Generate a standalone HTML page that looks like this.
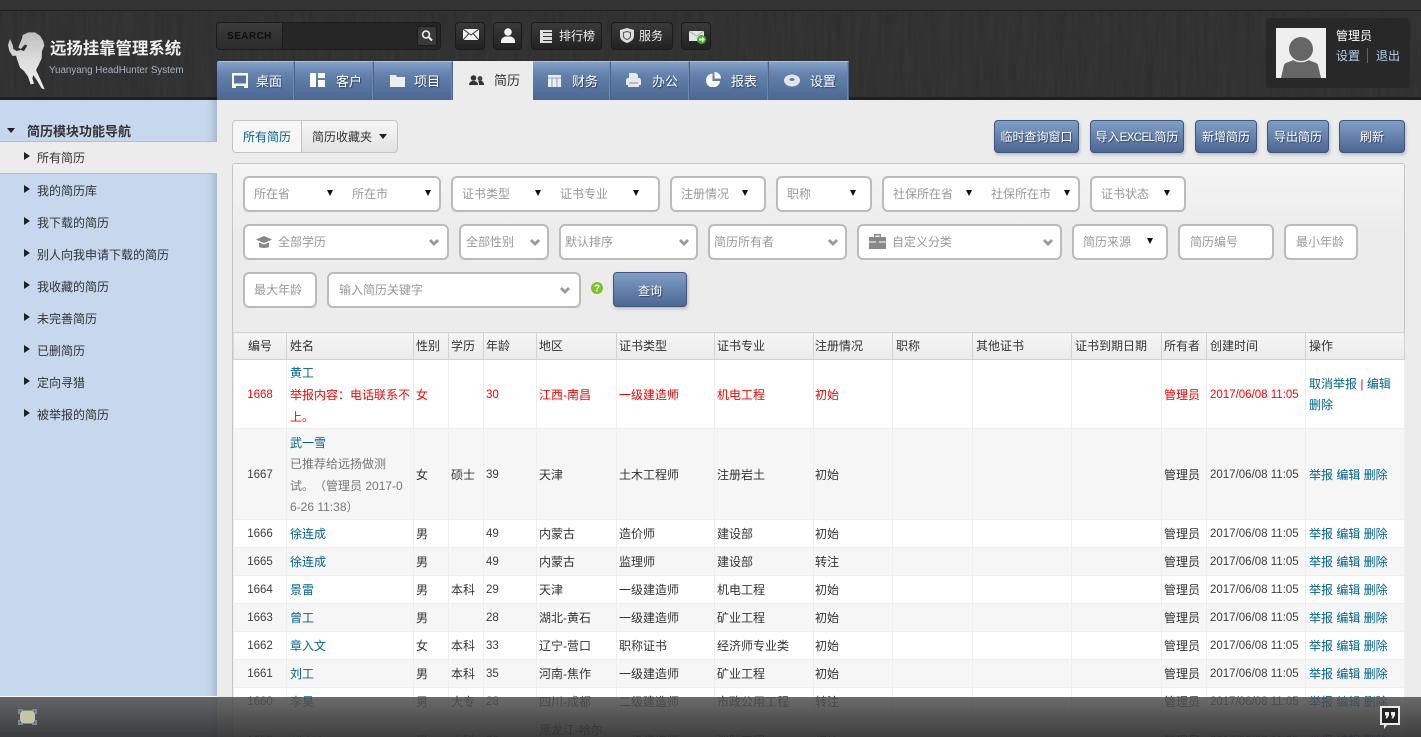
<!DOCTYPE html>
<html lang="zh"><head><meta charset="utf-8"><title>简历</title>
<style>
*{box-sizing:border-box;text-spacing-trim:space-all}
html,body{margin:0;padding:0;width:1421px;height:737px;overflow:hidden;background:#ececec}
body{position:relative;font:12px/1 "Liberation Sans","WenQuanYi Zen Hei","Noto Sans CJK SC",sans-serif;color:#333}
.a{position:absolute;white-space:nowrap}
#hd{left:0;top:0;width:1421px;height:100px;background:#343434;overflow:hidden}
#hd .top{position:absolute;left:0;top:0;width:1421px;height:11px;background:#333;border-bottom:1px solid #1e1e1e}
#hd .bot{position:absolute;left:0;top:97px;width:1421px;height:3px;background:#1f1f1f}
.tb{position:absolute;top:22px;height:28px;border:1px solid #1a1a1a;border-radius:4px;background:linear-gradient(#3a3a3a,#222);color:#eee;line-height:26px}
.tab{position:absolute;top:61px;height:39px;background:linear-gradient(#85a3c9,#6483af 30%,#4c6691);border-top:1px solid #a9c0dc;border-right:1px solid #4d658b;box-shadow:inset -1px 0 0 #6e88ad;color:#fff;font-size:13px;line-height:40px;text-shadow:1px 1px 1px #2b3f60}
.tab svg{position:absolute;top:11px}
.tab span{position:absolute;top:0}
#sb{left:0;top:100px;width:217px;height:637px;background:#c6d7ee;box-shadow:inset -9px 0 8px -6px #9fb0c8}
.si{position:absolute;left:37px;font-size:12px;line-height:16px;color:#333}
.ar{position:absolute;left:24px;width:0;height:0;border-left:6px solid #222;border-top:4.5px solid transparent;border-bottom:4.5px solid transparent}
.bt{position:absolute;top:120px;height:33px;border:1px solid #3c5680;border-radius:4px;background:linear-gradient(#809fc6,#4d6792);color:#fff;text-align:center;line-height:32px;font-size:12px;text-shadow:1px 1px 1px #2b3f60;box-shadow:1px 2px 3px #bbb}
#panel{left:232px;top:163px;width:1173px;height:600px;border:1px solid #c6c6c6;border-radius:3px;background:linear-gradient(#f4f4f4,#ececec 70px)}
.f{position:absolute;height:36px;background:#fff;border:2px solid #bbb;border-radius:6px;color:#999;line-height:33px;font-size:12px}
.f span{position:absolute;top:0}
.f i{position:absolute;top:12px;width:0;height:0;margin-left:1px;border-left:3px solid transparent;border-right:3px solid transparent;border-top:6px solid #111}
.f svg{position:absolute}
table{position:absolute;left:233px;top:332px;width:1171px;table-layout:fixed;border-collapse:collapse;font-size:12px;background:#fff}
th{height:27px;font-weight:normal;text-align:left;padding:0 3px;background:linear-gradient(#f5f5f5,#ebebeb);border:1px solid #d2d2d2;border-left-color:#dcdcdc;color:#333;font-size:12px}
td{padding:2px 3px 0;border:1px solid #eee;line-height:21px;height:28px;color:#333;white-space:nowrap;overflow:hidden}
td:nth-child(n+3):nth-child(-n+8),th:nth-child(n+3):nth-child(-n+8),td:nth-child(13),th:nth-child(13){padding-left:2px}
td:nth-child(9),th:nth-child(9){padding-left:1px}
tr.e td{background:#f6f6f6}
tr.r td,tr.r td.n{color:#f00}
.n{font-size:11.5px;color:#3c3c3c}
.c{text-align:center}
td:first-child,th:first-child{padding-left:3px}
.l{color:#00628f}
tr.r td .l{color:#00628f}
.g{color:#777}
.b{color:#e0004f}
.p{font-family:"Noto Sans CJK TC",sans-serif}
#bar{left:0;top:697px;width:1421px;height:40px;background:linear-gradient(rgba(82,82,82,.85),rgba(48,48,48,.93))}
</style></head><body>

<div class="a" id="hd">
<svg width="1421" height="100" style="position:absolute;left:0;top:0"><filter id="t" x="0" y="0" width="100%" height="100%"><feTurbulence type="fractalNoise" baseFrequency="0.22 0.02" numOctaves="2" seed="4"/><feColorMatrix values="0 0 0 0 0 0 0 0 0 0 0 0 0 0 0 1.2 0 0 0 -0.4"/></filter><rect y="12" width="1421" height="85" filter="url(#t)" opacity=".16"/></svg>
<div class="top"></div><div class="bot"></div>

<svg class="a" style="left:0;top:25px" width="60" height="65" viewBox="0 0 180 195"><defs><linearGradient id="h" x1="0" y1="0" x2="0" y2="1"><stop offset="0" stop-color="#bdbdbd"/><stop offset=".5" stop-color="#dedede"/><stop offset="1" stop-color="#f2f2f2"/></linearGradient></defs><path d="M68 30L85 22 105 22 120 32 130 48 133 62 126 78 125 100 115 122 108 135 115 150 125 172 134 193 125 190 112 168 100 150 97 160 102 176 92 178 84 155 72 138 60 128 52 105 48 92 38 93 28 78 24 60 30 42 38 60 40 72 50 78 62 75 72 78 82 62 75 58 62 72 55 68 62 50 66 40z" fill="url(#h)"/></svg>
<div class="a" style="left:50px;top:41px;font-weight:bold;color:#eee;line-height:17px;font-size:16.4px">远扬挂靠管理系统</div>
<div class="a" style="left:49px;top:65px;font-size:9.8px;color:#a7b4c6;line-height:12px">Yuanyang HeadHunter System</div>

<div class="tb" style="left:216px;width:225px;background:#262626"><div style="position:absolute;left:0;top:0;width:66px;height:26px;background:linear-gradient(#3c3c3c,#2b2b2b);border-radius:3px 0 0 3px;border-right:1px solid #1a1a1a;color:#0e0e0e;font-size:10px;font-weight:bold;text-align:center;line-height:27px;letter-spacing:.4px">SEARCH</div>
<div style="position:absolute;left:200px;top:3px;width:20px;height:20px;background:#3a3a3a;border:1px solid #1c1c1c;border-radius:3px"><svg width="18" height="18" viewBox="0 0 18 18" style="position:absolute;left:0;top:0"><circle cx="8" cy="7.5" r="3.4" fill="none" stroke="#eee" stroke-width="1.6"/><path d="M10.5 10l3.5 3.5" stroke="#eee" stroke-width="2"/></svg></div></div>
<div class="tb" style="left:455px;width:30px"><svg width="16" height="11" viewBox="0 0 16 11" style="position:absolute;left:7px;top:6px"><rect width="16" height="11" fill="#f2f2f2"/><path d="M0 0l8 6 8-6M0 11l5.500-6M16 11l-5.500-6" fill="none" stroke="#333" stroke-width="1"/></svg></div>
<div class="tb" style="left:493px;width:29px"><svg width="14" height="15" viewBox="0 0 14 15" style="position:absolute;left:7px;top:5px"><circle cx="7" cy="4" r="3.800" fill="#f2f2f2"/><path d="M0 15v-2c0-3 3-4 4-4.500h6c1 .5 4 1.500 4 4.500v2z" fill="#f2f2f2"/></svg></div>
<div class="tb" style="left:531px;width:71px"><svg width="12" height="13" viewBox="0 0 12 13" style="position:absolute;left:8px;top:7px"><rect width="12" height="13" fill="#ddd"/><path d="M3 2.500h9M3 6.500h9M3 10.500h9" stroke="#333"/></svg><span style="position:absolute;left:27px;top:0">排行榜</span></div>
<div class="tb" style="left:611px;width:62px"><svg width="14" height="15" viewBox="0 0 14 15" style="position:absolute;left:8px;top:5px"><path d="M7 0l7 2v6c0 4-4 6-7 7-3-1-7-3-7-7V2z" fill="#ddd"/><path d="M7 3.500l3.500 1v3.500c0 2-2 3-3.500 3.500-1.500-.5-3.500-1.500-3.500-3.500V4.500z" fill="none" stroke="#555"/></svg><span style="position:absolute;left:27px;top:0">服务</span></div>
<div class="tb" style="left:681px;width:30px"><svg width="17" height="14" viewBox="0 0 17 14" style="position:absolute;left:7px;top:8px"><rect width="15" height="10" y="0" fill="#e6e6e6"/><path d="M0 0l7.500 5 7.500-5" fill="none" stroke="#aaa"/><circle cx="12.500" cy="8.500" r="4.500" fill="#43b02a"/><path d="M10 7.500h3v-2l3 3-3 3v-2h-3z" fill="#d8ffc0"/></svg></div>

<div class="tab" style="left:217px;width:78px;border-radius:2px 0 0 0"><svg width="16" height="15" viewBox="0 0 16 15" style="left:15px"><path d="M0 0h16v15h-4v-2H4v2H0z" fill="#fff"/><rect x="2" y="2.500" width="12" height="8" fill="#58749e"/></svg><span style="left:39px">桌面</span></div>
<div class="tab" style="left:295px;width:79px"><svg width="15" height="14" viewBox="0 0 15 14" style="left:15px"><path d="M0 0h6v14H0zM8 0h7v5H8zM8 7h7v7H8z" fill="#fff"/></svg><span style="left:41px">客户</span></div>
<div class="tab" style="left:374px;width:79px"><svg width="15" height="12" viewBox="0 0 15 12" style="left:16px;top:13px"><path d="M0 0h6l1 2h8v10H0z" fill="#eee"/></svg><span style="left:40px">项目</span></div>
<div class="a" style="left:453px;top:61px;width:80px;height:39px;background:#ececec;font-size:13px;line-height:40px;color:#333"><svg width="15" height="11" viewBox="0 0 15 11" style="position:absolute;left:16px;top:14px"><circle cx="4.500" cy="3" r="2.800" fill="#333"/><circle cx="11" cy="3.500" r="2.400" fill="#444"/><path d="M0 10c0-3 2-4 4.500-4s4.500 1 4.500 4zM10 10c0-2 0-3-1-4 3-1 6 0 6 4z" fill="#333"/></svg><span style="position:absolute;left:41px;top:0">简历</span></div>
<div class="tab" style="left:533px;width:78px"><svg width="13" height="12" viewBox="0 0 13 12" style="left:15px;top:13px"><rect width="13" height="12" fill="#eee"/><path d="M0 3h13M4 3v9M9 3v9" stroke="#8fa5c4"/></svg><span style="left:39px">财务</span></div>
<div class="tab" style="left:611px;width:79px"><svg width="15" height="14" viewBox="0 0 15 14" style="left:15px"><path d="M3 0h7l2 2v3H3zM1 5h13l1 2v5h-2v2H2v-2H0V7z" fill="#e8e8e8"/><path d="M3 10h9" stroke="#7c92b4"/></svg><span style="left:41px">办公</span></div>
<div class="tab" style="left:690px;width:79px"><svg width="15" height="15" viewBox="0 0 15 15" style="left:16px;top:10px"><path d="M6.500 1.500v7.500h7.500A7 7 0 1 1 6.500 1.500z" fill="#fff"/><path d="M8.500 0a6.500 6.500 0 0 1 6.500 6.500H8.500z" fill="#fff"/></svg><span style="left:41px">报表</span></div>
<div class="tab" style="left:769px;width:80px"><svg width="16" height="13" viewBox="0 0 16 13" style="left:15px;top:12px"><ellipse cx="8" cy="6.500" rx="8" ry="6" fill="#e4e4e4"/><ellipse cx="8" cy="5.500" rx="2.500" ry="1.500" fill="#5d7aa3"/></svg><span style="left:41px">设置</span></div>

<div class="a" style="left:1266px;top:18px;width:144px;height:70px;background:#282828;border-radius:3px"></div>
<svg class="a" style="left:1276px;top:28px" width="50" height="50" viewBox="0 0 50 50"><rect width="50" height="50" fill="#efefef"/><circle cx="25" cy="21" r="12" fill="#666"/><path d="M5 50l3-13c1-3 7-3 9-5 5 3 11 3 16 0 2 2 8 2 9 5l3 13z" fill="#666"/></svg>
<div class="a" style="left:1336px;top:29px;color:#fff;font-size:12px;line-height:14px">管理员</div>
<div class="a" style="left:1336px;top:49px;color:#b5d0ee;font-size:12px;line-height:14px">设置</div>
<div class="a" style="left:1367px;top:48px;width:1px;height:15px;background:#666"></div>
<div class="a" style="left:1376px;top:49px;color:#b5d0ee;font-size:12px;line-height:14px">退出</div>
</div>

<div class="a" id="sb">
<div style="position:absolute;left:7px;top:28px;width:0;height:0;border-left:4px solid transparent;border-right:4px solid transparent;border-top:5px solid #222"></div>
<div class="si" style="left:27px;top:24px;font-weight:bold;font-size:13px">简历模块功能导航</div>
<div style="position:absolute;left:0;top:41px;width:217px;height:33px;background:#ececec;border-top:1px solid #a9c0de;border-bottom:1px solid #a9c0de"></div>
<i class="ar" style="top:52px"></i><div class="si" style="top:50px">所有简历</div>
<i class="ar" style="top:85px"></i><div class="si" style="top:83px">我的简历库</div>
<i class="ar" style="top:117px"></i><div class="si" style="top:115px">我下载的简历</div>
<i class="ar" style="top:149px"></i><div class="si" style="top:147px">别人向我申请下载的简历</div>
<i class="ar" style="top:181px"></i><div class="si" style="top:179px">我收藏的简历</div>
<i class="ar" style="top:213px"></i><div class="si" style="top:211px">未完善简历</div>
<i class="ar" style="top:245px"></i><div class="si" style="top:243px">已删简历</div>
<i class="ar" style="top:277px"></i><div class="si" style="top:275px">定向寻猎</div>
<i class="ar" style="top:309px"></i><div class="si" style="top:307px">被举报的简历</div>
</div>

<div class="a" style="left:232px;top:120px;width:70px;height:33px;border:1px solid #c4c4c4;border-radius:4px 0 0 4px;background:#f6f6f6;color:#00628f;line-height:32px;text-align:center;font-size:12px">所有简历</div>
<div class="a" style="left:301px;top:120px;width:97px;height:33px;border:1px solid #c4c4c4;border-radius:0 4px 4px 0;background:linear-gradient(#f6f6f6,#e2e2e2);line-height:32px;padding-left:10px;font-size:12px">简历收藏夹<i style="position:absolute;left:77px;top:13px;width:0;height:0;border-left:4px solid transparent;border-right:4px solid transparent;border-top:5px solid #222"></i></div>
<div class="bt" style="left:994px;width:85px">临时查询窗口</div>
<div class="bt" style="left:1090px;width:94px">导入<span style="font-size:11.5px;letter-spacing:-.6px">EXCEL</span>简历</div>
<div class="bt" style="left:1195px;width:62px">新增简历</div>
<div class="bt" style="left:1267px;width:62px">导出简历</div>
<div class="bt" style="left:1339px;width:66px">刷新</div>

<div class="a" id="panel"></div>

<div class="f" style="left:243px;top:176px;width:198px"><span style="left:9px">所在省</span><i style="left:81px"></i><span style="left:107px">所在市</span><i style="left:179px"></i></div>
<div class="f" style="left:451px;top:176px;width:209px"><span style="left:9px">证书类型</span><i style="left:81px"></i><span style="left:107px">证书专业</span><i style="left:179px"></i></div>
<div class="f" style="left:670px;top:176px;width:96px"><span style="left:9px">注册情况</span><i style="left:69px"></i></div>
<div class="f" style="left:776px;top:176px;width:96px"><span style="left:9px">职称</span><i style="left:71px"></i></div>
<div class="f" style="left:882px;top:176px;width:198px"><span style="left:9px">社保所在省</span><i style="left:81px"></i><span style="left:107px">社保所在市</span><i style="left:179px"></i></div>
<div class="f" style="left:1090px;top:176px;width:96px"><span style="left:9px">证书状态</span><i style="left:71px"></i></div>

<svg width="0" height="0" style="position:absolute"><defs><path id="ch" d="M0 2l2-2 3 3 3-3 2 2-5 5z" fill="#999"/></defs></svg>
<div class="f" style="left:243px;top:224px;width:206px"><svg width="16" height="12" viewBox="0 0 16 12" style="left:11px;top:10px"><path d="M8 0l8 3.500-8 3.500L0 3.500z" fill="#888"/><path d="M3 6.500l5 2 5-2V11c-3 1.300-7 1.300-10 0z" fill="#888"/></svg><span style="left:33px">全部学历</span><svg width="10" height="7" style="left:184px;top:13px"><use href="#ch"/></svg></div>
<div class="f" style="left:459px;top:224px;width:90px"><span style="left:5px">全部性别</span><svg width="10" height="7" style="left:69px;top:13px"><use href="#ch"/></svg></div>
<div class="f" style="left:559px;top:224px;width:139px"><span style="left:4px">默认排序</span><svg width="10" height="7" style="left:118px;top:13px"><use href="#ch"/></svg></div>
<div class="f" style="left:708px;top:224px;width:139px"><span style="left:4px">简历所有者</span><svg width="10" height="7" style="left:118px;top:13px"><use href="#ch"/></svg></div>
<div class="f" style="left:857px;top:224px;width:205px"><svg width="17" height="15" viewBox="0 0 17 15" style="left:10px;top:8px"><path d="M5 0h7v3h5v12H0V3h5zM6.500 1.500V3h4V1.500z" fill="#888" fill-rule="evenodd"/><path d="M0 8h7M10 8h7" stroke="#fff"/></svg><span style="left:33px">自定义分类</span><svg width="10" height="7" style="left:184px;top:13px"><use href="#ch"/></svg></div>
<div class="f" style="left:1072px;top:224px;width:96px"><span style="left:9px">简历来源</span><i style="left:72px"></i></div>
<div class="f" style="left:1178px;top:224px;width:96px"><span style="left:10px">简历编号</span></div>
<div class="f" style="left:1284px;top:224px;width:74px"><span style="left:10px">最小年龄</span></div>
<div class="f" style="left:243px;top:272px;width:74px"><span style="left:9px">最大年龄</span></div>
<div class="f" style="left:327px;top:272px;width:254px"><span style="left:10px">输入简历关键字</span><svg width="10" height="7" style="left:231px;top:13px"><use href="#ch"/></svg></div>
<svg class="a" style="left:591px;top:282px" width="12" height="12" viewBox="0 0 12 12"><circle cx="6" cy="6" r="6" fill="#7cc225"/><text x="6" y="9.500" text-anchor="middle" font-size="10" font-weight="bold" fill="#fff" font-family="Liberation Sans">?</text></svg>
<div class="bt" style="left:613px;top:272px;width:74px;height:35px;line-height:37px">查询</div>

<table>
<colgroup><col style="width:53px"><col style="width:127px"><col style="width:35px"><col style="width:35px"><col style="width:53px"><col style="width:80px"><col style="width:98px"><col style="width:99px"><col style="width:79px"><col style="width:80px"><col style="width:99px"><col style="width:90px"><col style="width:45px"><col style="width:99px"><col style="width:99px"></colgroup>
<tr><th class="c">编号</th><th>姓名</th><th>性别</th><th>学历</th><th>年龄</th><th>地区</th><th>证书类型</th><th>证书专业</th><th>注册情况</th><th>职称</th><th>其他证书</th><th>证书到期日期</th><th>所有者</th><th>创建时间</th><th>操作</th></tr>
<tr class="r" style="height:69px"><td class="n c">1668</td><td><span class="l">黄工</span><br>举报内容<span class="p">：</span>电话联系不<br>上<span class="p">。</span></td><td>女</td><td></td><td class="n">30</td><td>江西-南昌</td><td>一级建造师</td><td>机电工程</td><td>初始</td><td></td><td></td><td></td><td>管理员</td><td class="n">2017/06/08 11:05</td><td><span class="l">取消举报</span> <span class="b">|</span> <span class="l">编辑<br>删除</span></td></tr>
<tr class="e" style="height:91px"><td class="n c">1667</td><td><span class="l">武一雪</span><br><span class="g">已推荐给远扬做测<br>试<span class="p">。</span>（管理员 2017-0<br>6-26 11:38）</span></td><td>女</td><td>硕士</td><td class="n">39</td><td>天津</td><td>土木工程师</td><td>注册岩土</td><td>初始</td><td></td><td></td><td></td><td>管理员</td><td class="n">2017/06/08 11:05</td><td class="l">举报 编辑 删除</td></tr>
<tr><td class="n c">1666</td><td class="l">徐连成</td><td>男</td><td></td><td class="n">49</td><td>内蒙古</td><td>造价师</td><td>建设部</td><td>初始</td><td></td><td></td><td></td><td>管理员</td><td class="n">2017/06/08 11:05</td><td class="l">举报 编辑 删除</td></tr>
<tr class="e"><td class="n c">1665</td><td class="l">徐连成</td><td>男</td><td></td><td class="n">49</td><td>内蒙古</td><td>监理师</td><td>建设部</td><td>转注</td><td></td><td></td><td></td><td>管理员</td><td class="n">2017/06/08 11:05</td><td class="l">举报 编辑 删除</td></tr>
<tr><td class="n c">1664</td><td class="l">景雷</td><td>男</td><td>本科</td><td class="n">29</td><td>天津</td><td>一级建造师</td><td>机电工程</td><td>初始</td><td></td><td></td><td></td><td>管理员</td><td class="n">2017/06/08 11:05</td><td class="l">举报 编辑 删除</td></tr>
<tr class="e"><td class="n c">1663</td><td class="l">曾工</td><td>男</td><td></td><td class="n">28</td><td>湖北-黄石</td><td>一级建造师</td><td>矿业工程</td><td>初始</td><td></td><td></td><td></td><td>管理员</td><td class="n">2017/06/08 11:05</td><td class="l">举报 编辑 删除</td></tr>
<tr><td class="n c">1662</td><td class="l">章入文</td><td>女</td><td>本科</td><td class="n">33</td><td>辽宁-营口</td><td>职称证书</td><td>经济师专业类</td><td>初始</td><td></td><td></td><td></td><td>管理员</td><td class="n">2017/06/08 11:05</td><td class="l">举报 编辑 删除</td></tr>
<tr class="e"><td class="n c">1661</td><td class="l">刘工</td><td>男</td><td>本科</td><td class="n">35</td><td>河南-焦作</td><td>一级建造师</td><td>矿业工程</td><td>初始</td><td></td><td></td><td></td><td>管理员</td><td class="n">2017/06/08 11:05</td><td class="l">举报 编辑 删除</td></tr>
<tr><td class="n c">1660</td><td class="l">李昊</td><td>男</td><td>大专</td><td class="n">28</td><td>四川-成都</td><td>二级建造师</td><td>市政公用工程</td><td>转注</td><td></td><td></td><td></td><td>管理员</td><td class="n">2017/06/08 11:05</td><td class="l">举报 编辑 删除</td></tr>
<tr class="e" style="height:49px"><td class="n c">1659</td><td class="l">刘小小</td><td>男</td><td>本科</td><td class="n">36</td><td>黑龙江-哈尔<br>滨</td><td>一级建造师</td><td>消防工程</td><td>初始</td><td></td><td></td><td></td><td>管理员</td><td class="n">2017/06/08 11:05</td><td class="l">举报 编辑 删除</td></tr>
</table>

<div class="a" style="left:0;top:696px;width:217px;height:1px;background:#fff"></div>
<div class="a" id="bar"></div>
<svg class="a" style="left:18px;top:709px" width="19" height="16" viewBox="0 0 19 16"><path d="M0 0h5v2H2v3H0zM14 0h5v5h-2V2h-3zM0 11h2v3h3v2H0zM17 11h2v5h-5v-2h3z" fill="#7488a8"/><rect x="2" y="1.500" width="15" height="13" rx="4" fill="#c3c5a4"/></svg>
<svg class="a" style="left:1380px;top:706px" width="20" height="23" viewBox="0 0 20 23"><path d="M0 0h20v19H7l-3 4v-4H0z" fill="#e8e8e8"/><rect x="2" y="2" width="16" height="15" fill="#222"/><path d="M5 6h4v3.500l-2 3H5.500l1-3H5zM11 6h4v3.500l-2 3h-1.500l1-3H11z" fill="#eee"/></svg>
</body></html>
